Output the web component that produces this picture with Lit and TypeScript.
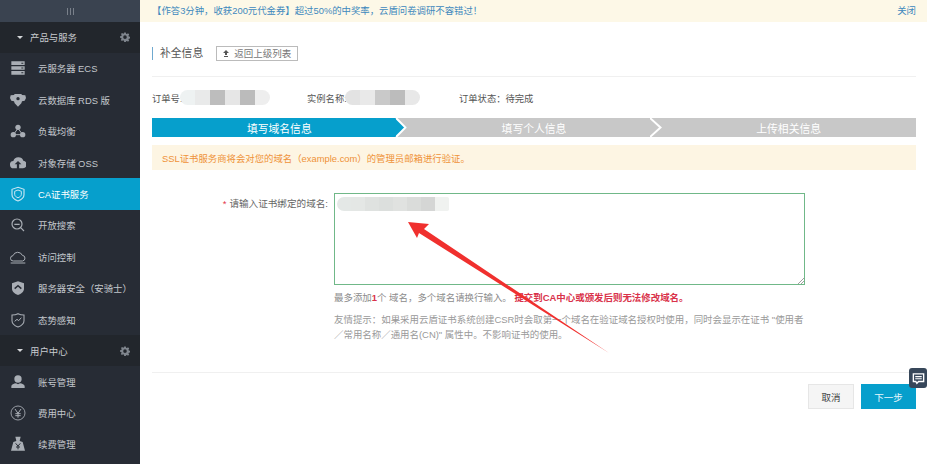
import { LitElement, html, css, svg } from "lit";
import { customElement } from "lit/decorators.js";

const gear = html`<svg class="gear" viewBox="0 0 24 24"><path fill="#7f858d" fill-rule="evenodd" d="M10 1h4l.6 3.2 2 .8L19.300 3.200l2.800 2.800-1.800 2.700.8 2 3.200.6v4l-3.200.6-.8 2 1.800 2.700-2.800 2.800-2.700-1.800-2 .8L14 24h-4l-.6-3.200-2-.8-2.700 1.800-2.800-2.800 1.800-2.700-.8-2L0 14v-4l3.200-.6.8-2L2.200 4.700 5 2.200l2.700 1.800 2-.8zM12 8a4.300 4.300 0 1 0 0 8.600A4.300 4.300 0 0 0 12 8z"/></svg>`;

const icons: Record<string, unknown> = {
  server: svg`<path fill="#a9aeb5" d="M2 2h20v5.500H2zM2 9.200h20v5.600H2zM2 16.500h20V22H2z"/><path fill="#272c35" d="M17 4h3v1.500h-3zM17 11.200h3v1.500h-3zM17 18.500h3V20h-3z"/>`,
  db: svg`<path fill="#a9aeb5" d="M7 3h10l1 1.500L23 5l1 4-2 4-4 1-1 3-5 5-5-5-1-3-4-1-2-4 1-4 5-.5z"/><circle cx="12" cy="10" r="2.500" fill="#272c35"/>`,
  nodes: svg`<circle cx="12" cy="6.500" r="4" fill="#a9aeb5"/><circle cx="5" cy="17.500" r="4" fill="#a9aeb5"/><circle cx="19" cy="17.500" r="4" fill="#a9aeb5"/><path stroke="#a9aeb5" stroke-width="1.500" d="M12 8 5 17.500h14z" fill="none"/>`,
  cloudup: svg`<path fill="#a9aeb5" d="M6 20a5.500 5.500 0 0 1-1-11 8 8 0 0 1 15-.5 5.800 5.800 0 0 1-.5 11.500z"/><path fill="#272c35" d="M12 9l5 5h-3.300v7h-3.400v-7H7z"/>`,
  shield: svg`<path fill="none" stroke="#c8e6f3" stroke-width="1.700" d="M12 2 21 5v8c0 4.500-4 7.500-9 9.500C7 20.500 3 17.500 3 13V5z"/><path fill="none" stroke="#c8e6f3" stroke-width="1.500" d="M12 6 17 8v4.500c0 2.500-2.200 4-5 5.200-2.800-1.200-5-2.700-5-5.200V8z"/>`,
  search: svg`<circle cx="10.500" cy="10.500" r="7.500" fill="none" stroke="#a9aeb5" stroke-width="1.800"/><path stroke="#a9aeb5" stroke-width="1.800" d="M6.500 11h8M16 16l5 5" fill="none"/>`,
  cloud: svg`<path fill="none" stroke="#a9aeb5" stroke-width="1.500" d="M5 18a4 4 0 0 1-.5-8A7.500 7.500 0 0 1 18.500 9.500 4.300 4.300 0 0 1 19 18zM1 21h22"/>`,
  shieldup: svg`<path fill="#a9aeb5" d="M12 2 21 5v8c0 4.500-4 7.500-9 9.500C7 20.500 3 17.500 3 13V5z"/><path fill="none" stroke="#272c35" stroke-width="2.200" d="m7 13 5-4.500 5 4.500"/>`,
  shieldchart: svg`<path fill="none" stroke="#a9aeb5" stroke-width="1.600" d="M12 2.500c3 1.500 5.800 2 9 2v8.500c0 4.500-4 7.500-9 9.500C7 20.500 3 17.500 3 13V4.500c3.200 0 6-.5 9-2z"/><path fill="none" stroke="#a9aeb5" stroke-width="1.500" d="m7 14 3.500-3 2.500 2 4-4.500"/>`,
  user: svg`<circle cx="12" cy="7.500" r="5.500" fill="#a9aeb5"/><path fill="#a9aeb5" d="M2 21v-2.500c0-2.500 4-4 7-4.500l3 1.500 3-1.500c3 .5 7 2 7 4.500V21z"/>`,
  yen: svg`<circle cx="12" cy="12" r="10.500" fill="none" stroke="#a9aeb5" stroke-width="1.300"/><path fill="none" stroke="#a9aeb5" stroke-width="1.500" d="m7.500 6 4.500 6.500L16.500 6M12 12.500V19M8 13h8M8 16h8"/>`,
  bag: svg`<path fill="#a9aeb5" d="M8 1h8l-1.500 6 1 1 3.500 1 3.500 13H1.500L5 9l3.500-1 1-1z"/><path fill="none" stroke="#272c35" stroke-width="1.500" d="m8.500 11 3.500 4 3.500-4M12 15v5M9 16.500h6"/>`,
};

const ic = (n: string) => html`<svg class="icon" viewBox="0 0 24 24">${icons[n]}</svg>`;

const group1 = [
  ["server", "云服务器 ECS"],
  ["db", "云数据库 RDS 版"],
  ["nodes", "负载均衡"],
  ["cloudup", "对象存储 OSS"],
  ["shield", "CA证书服务"],
  ["search", "开放搜索"],
  ["cloud", "访问控制"],
  ["shieldup", "服务器安全（安骑士）"],
  ["shieldchart", "态势感知"],
];
const group2 = [
  ["user", "账号管理"],
  ["yen", "费用中心"],
  ["bag", "续费管理"],
];

@customElement("app-root")
export class AppRoot extends LitElement {
  static styles = css`
    :host {
      display: block;
      height: 464px;
      overflow: hidden;
      background: #fff;
      font-family: "Liberation Sans", "Noto Sans CJK SC", sans-serif;
      font-size: 9.4px;
      color: #555;
    }
    .page { display: flex; height: 464px; position: relative; overflow: hidden; }
    .side { width: 140px; flex: none; background: #272c35; color: #c3c7cc; }
    .handle {
      height: 22px; background: #3a4350; display: flex; align-items: center; justify-content: center; gap: 2px;
    }
    .handle i { width: 1px; height: 7px; background: #79808a; }
    .group {
      height: 30.7px; display: flex; align-items: center; background: #22262c; padding: 0 10px 0 17px; color: #c9ccd0;
    }
    .group .caret {
      width: 0; height: 0; border: 3px solid transparent; border-top: 3px solid #d5d7da; border-bottom: 0; margin-right: 7px;
    }
    .group .label { flex: 1; }
    .gear { width: 10px; height: 10px; }
    .item { height: 31.4px; display: flex; align-items: center; padding-left: 10px; }
    .item.on { background: #069fcc; color: #fff; }
    .icon { width: 16px; height: 16px; margin-right: 12px; flex: none; }
    .item span { white-space: nowrap; }

    .main { width: 787px; flex: none; }
    .banner {
      height: 22px; background: #fdf8e7; color: #3d88bd; font-size: 9.4px;
      display: flex; align-items: center; justify-content: space-between; padding: 0 11px 2px 12px; box-sizing: border-box;
    }
    .content { padding: 0 11px 0 12px; }
    .titlebar {
      height: 55px; border-bottom: 1px solid #f0f0f0; display: flex; align-items: center; box-sizing: border-box;
      padding-top: 8px;
    }
    .titlebar .title { border-left: 1px solid #6fa9cf; padding-left: 7px; font-size: 10.8px; line-height: 13px; color: #555; margin-right: 13px; }
    .back {
      width: 82px; height: 15px; border: 1px solid #bbb; box-sizing: border-box; display: flex; align-items: center; justify-content: center;
      font-size: 9.5px; color: #777; gap: 5px;
    }
    .back svg { width: 6px; height: 7px; }
    .order { height: 41px; display: flex; align-items: center; font-size: 9.3px; color: #555; }
    .cell { display: flex; align-items: center; white-space: nowrap; }
    .c1 { width: 155px; }
    .c2 { width: 152px; }
    .blur { display: flex; height: 15px; border-radius: 8px; overflow: hidden; margin-left: -2px; }
    .blur i { width: 15px; height: 100%; }
    .steps { height: 19px; display: flex; background: #c8c8c8; color: #fff; font-size: 10.8px; position: relative; }
    .step { flex: 1; display: flex; align-items: center; justify-content: center; position: relative; }
    .step.on { background: #069fcc; clip-path: polygon(0 0, 243px 0, 100% 50%, 243px 100%, 0 100%); }
    .chev { position: absolute; top: 0; width: 14px; height: 19px; }
    .alert {
      margin-top: 8px; height: 25px; background: #fdf5e3; color: #ef9238; font-size: 9.4px;
      display: flex; align-items: center; padding-left: 10px;
    }
    .form { display: flex; margin-top: 23px; }
    .label-col { width: 176px; margin-right: 6px; flex: none; text-align: right; font-size: 9.6px; color: #666; padding-top: 3px; line-height: 16px; }
    .label-col em { color: #e3344a; font-style: normal; margin-right: 3px; }
    .field { width: 471px; flex: none; }
    .ta {
      height: 92px; border: 1.5px solid #70b888; box-sizing: border-box; position: relative; padding: 3px 2px;
    }
    .ta .blur { height: 14px; margin: 0; border-radius: 8px 2px 2px 8px; width: fit-content; }
    .ta .blur i { width: 14px; }
    .grip { position: absolute; right: 0; bottom: 0; width: 6px; height: 6px; }
    .hint1 { margin-top: 6px; line-height: 14px; font-size: 9.45px; color: #8c8c8c; white-space: nowrap; }
    .hint1 b { color: #d9324a; font-weight: 700; }
    .hint2 { margin-top: 7px; line-height: 15px; font-size: 9.45px; color: #999; width: 470px; }
    .sep { margin-top: 30px; border-top: 1px solid #f0f0f0; }
    .actions { display: flex; justify-content: flex-end; gap: 7px; margin-top: 11px; }
    .btn { height: 25px; box-sizing: border-box; display: flex; align-items: center; justify-content: center; font-size: 9.5px; }
    .cancel { width: 46px; background: #f5f5f5; border: 1px solid #e6e6e6; color: #444; }
    .next { width: 55px; background: #069fcc; color: #e8f7fc; }
    .chat {
      position: absolute; left: 909px; top: 368px; width: 18px; height: 20px; background: #37475a;
      border-radius: 3px; display: flex; align-items: center; justify-content: center;
    }
    .chat svg { width: 13px; height: 13px; }
    .arrow { position: absolute; left: 0; top: 0; width: 939px; height: 464px; pointer-events: none; }
  `;

  private blur(cols: string[]) {
    return html`<div class="blur">${cols.map((c) => html`<i style="background:${c}"></i>`)}</div>`;
  }

  render() {
    return html`
      <div class="page">
        <aside class="side">
          <div class="handle"><i></i><i></i><i></i></div>
          <div class="group"><span class="caret"></span><span class="label">产品与服务</span>${gear}</div>
          <div>
            ${group1.map(([i, t]) => html`<div class="item ${t === "CA证书服务" ? "on" : ""}">${ic(i)}<span>${t}</span></div>`)}
          </div>
          <div class="group"><span class="caret"></span><span class="label">用户中心</span>${gear}</div>
          <div>${group2.map(([i, t]) => html`<div class="item">${ic(i)}<span>${t}</span></div>`)}</div>
        </aside>
        <main class="main">
          <div class="banner">
            <span>【作答3分钟，收获200元代金券】超过50%的中奖率，云盾问卷调研不容错过！</span><span>关闭</span>
          </div>
          <div class="content">
            <div class="titlebar">
              <span class="title">补全信息</span>
              <span class="back"><svg viewBox="0 0 6 7"><path fill="#555" d="M3 0 6 3H4v2H2V3H0zM1 6h4v1H1z"/></svg>返回上级列表</span>
            </div>
            <div class="order">
              <div class="cell c1">订单号:${this.blur(["#eef2f2", "#e9eaea", "#bdbdbd", "#e6e6e6", "#bbb", "#eee"])}</div>
              <div class="cell c2">实例名称:${this.blur(["#e3e3e3", "#e9e9e9", "#c9c9c9", "#bcbcbc", "#e8e8e8"])}</div>
              <div class="cell">订单状态：待完成</div>
            </div>
            <div class="steps">
              <div class="step on">填写域名信息</div>
              <div class="step">填写个人信息</div>
              <div class="step">上传相关信息</div>
              <svg class="chev" style="left:244px" viewBox="0 0 14 19"><path d="M0 0 9.500 9.500 0 19" fill="none" stroke="#fff" stroke-width="2"/></svg>
              <svg class="chev" style="left:498px" viewBox="0 0 14 19"><path d="M0 0 10.500 9.500 0 19" fill="none" stroke="#fff" stroke-width="2"/></svg>
            </div>
            <div class="alert">SSL证书服务商将会对您的域名（example.com）的管理员邮箱进行验证。</div>
            <div class="form">
              <div class="label-col"><em>*</em>请输入证书绑定的域名:</div>
              <div class="field">
                <div class="ta">
                  ${this.blur(["#e4e8e6", "#e4e7e5", "#dfe2e0", "#dcdfdd", "#e0e2e0", "#dadcda", "#d5d6d5", "#f0f2f0"])}
                  <svg class="grip" viewBox="0 0 6 6"><path d="M0 6 6 0M3 6l3-3" stroke="#777" stroke-width=".7"/></svg>
                </div>
                <div class="hint1">最多添加<b>1</b>个 域名，多个域名请换行输入。 <b>提交到CA中心或颁发后则无法修改域名。</b></div>
                <div class="hint2">友情提示：如果采用云盾证书系统创建CSR时会取第一个域名在验证域名授权时使用，同时会显示在证书 "使用者／常用名称／通用名(CN)" 属性中。不影响证书的使用。</div>
              </div>
            </div>
            <div class="sep"></div>
            <div class="actions">
              <div class="btn cancel">取消</div>
              <div class="btn next">下一步</div>
            </div>
          </div>
        </main>
        <div class="chat">
          <svg viewBox="0 0 24 24"><path fill="none" stroke="#fff" stroke-width="2.500" d="M2.500 3.500h19v14H12l-3 3.500-2-3.500H2.500z"/><path stroke="#fff" stroke-width="2" d="M6 8.500h12M6 12.500h12"/></svg>
        </div>
        <svg class="arrow" viewBox="0 0 939 464"><path fill="#f0302e" d="M408 222 429 224 424 229 609 353 419 233 417 238z"/></svg>
      </div>
    `;
  }
}
